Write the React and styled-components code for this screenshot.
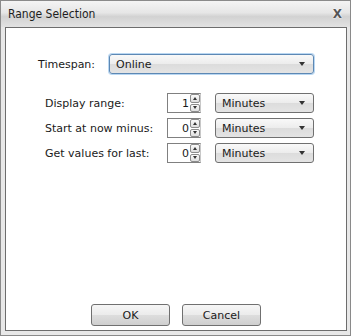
import React from "react";
import styled, { createGlobalStyle } from "styled-components";

const Global = createGlobalStyle`
  html, body {
    margin: 0;
    padding: 0;
    background: #ffffff;
  }
  body {
    font-family: "DejaVu Sans", sans-serif;
    font-size: 11px;
    color: #1a1a1a;
  }
`;

const Window = styled.div`
  width: 351px;
  height: 336px;
  box-sizing: border-box;
  border: 1px solid #8a8a8a;
  background: #e8e8e8;
  display: flex;
  flex-direction: column;
`;

const TitleBar = styled.div`
  height: 26px;
  flex: none;
  display: flex;
  align-items: center;
  justify-content: space-between;
  padding: 0 8px 0 7px;
  background: linear-gradient(#f4f4f4 0%, #e6e6e6 45%, #d2d2d2 60%, #e2e2e2 100%);
`;

const Title = styled.span`
  font-family: "DejaVu Sans Condensed", "DejaVu Sans", sans-serif;
  font-size: 12px;
  color: #1e1e1e;
`;

const Close = styled.span`
  font-weight: bold;
  font-size: 12px;
  color: #555;
  text-shadow: 0 0 1px #fff, 0 0 2px #fff;
`;

const Frame = styled.div`
  flex: 1;
  padding: 0 4px 4px 4px;
  display: flex;
`;

const Panel = styled.div`
  flex: 1;
  background: #ffffff;
  border: 1px solid #6d6d6d;
  display: flex;
  flex-direction: column;
  padding: 26px 32px 4px 32px;
`;

const TimespanRow = styled.div`
  display: flex;
  align-items: center;
  gap: 14px;
`;

const Label = styled.span`
  white-space: nowrap;
`;

const Select = styled.div`
  box-sizing: border-box;
  height: 20px;
  width: ${(p) => (p.$w ? `${p.$w}px` : "auto")};
  flex: ${(p) => (p.$w ? "none" : 1)};
  display: flex;
  align-items: center;
  justify-content: space-between;
  padding: 0 8px 0 6px;
  border: 1px solid ${(p) => (p.$focus ? "#5d88b4" : "#707070")};
  border-radius: 3px;
  background: linear-gradient(#f9f9f9 0%, #ececec 50%, #dcdcdc 51%, #e4e4e4 100%);
  box-shadow: ${(p) => (p.$focus ? "0 0 0 1px #b9d7f2" : "none")};
`;

const Arrow = styled.span`
  width: 0;
  height: 0;
  border-left: 3.5px solid transparent;
  border-right: 3.5px solid transparent;
  border-top: 4px solid #333;
`;

const Grid = styled.div`
  margin-top: 19px;
  margin-left: 7px;
  display: grid;
  grid-template-columns: 122px auto auto;
  row-gap: 5px;
  align-items: center;
`;

const Spinner = styled.div`
  display: flex;
  height: 20px;
  margin-right: 14px;
`;

const NumBox = styled.div`
  box-sizing: border-box;
  width: 23px;
  height: 20px;
  border: 1px solid #808080;
  border-right: none;
  display: flex;
  align-items: center;
  justify-content: flex-end;
  padding-right: 1px;
`;

const SpinButtons = styled.div`
  display: flex;
  flex-direction: column;
  gap: 1px;
  box-sizing: border-box;
  border-top: 1px solid #808080;
  border-bottom: 1px solid #808080;
  border-right: 1px solid #c8c8c8;
`;

const SpinBtn = styled.div`
  box-sizing: border-box;
  width: 10px;
  height: 8.5px;
  border: 1px solid #8c8c8c;
  border-radius: 2px;
  background: linear-gradient(#fafafa, #dedede);
  display: flex;
  align-items: center;
  justify-content: center;
  &::after {
    content: "";
    border-left: 2.5px solid transparent;
    border-right: 2.5px solid transparent;
    ${(p) => (p.$up ? "border-bottom: 3px solid #333;" : "border-top: 3px solid #333;")}
  }
`;

const Spacer = styled.div`
  flex: 1;
`;

const Footer = styled.div`
  display: flex;
  justify-content: center;
  gap: 12px;
`;

const Button = styled.button`
  box-sizing: border-box;
  width: 79px;
  height: 22px;
  font-family: inherit;
  font-size: 11px;
  color: #1a1a1a;
  border: 1px solid #707070;
  border-radius: 3px;
  background: linear-gradient(#f6f6f6 0%, #ebebeb 50%, #dddddd 51%, #cfcfcf 100%);
  padding: 0;
`;

const rows = [
  { label: "Display range:", value: 1 },
  { label: "Start at now minus:", value: 0 },
  { label: "Get values for last:", value: 0 },
];

export default function App() {
  return (
    <>
      <Global />
      <Window>
        <TitleBar>
          <Title>Range Selection</Title>
          <Close>X</Close>
        </TitleBar>
        <Frame>
          <Panel>
            <TimespanRow>
              <Label>Timespan:</Label>
              <Select $focus>
                <span>Online</span>
                <Arrow />
              </Select>
            </TimespanRow>
            <Grid>
              {rows.map((r) => (
                <React.Fragment key={r.label}>
                  <Label>{r.label}</Label>
                  <Spinner>
                    <NumBox>{r.value}</NumBox>
                    <SpinButtons>
                      <SpinBtn $up />
                      <SpinBtn />
                    </SpinButtons>
                  </Spinner>
                  <Select $w={99}>
                    <span>Minutes</span>
                    <Arrow />
                  </Select>
                </React.Fragment>
              ))}
            </Grid>
            <Spacer />
            <Footer>
              <Button>OK</Button>
              <Button>Cancel</Button>
            </Footer>
          </Panel>
        </Frame>
      </Window>
    </>
  );
}
